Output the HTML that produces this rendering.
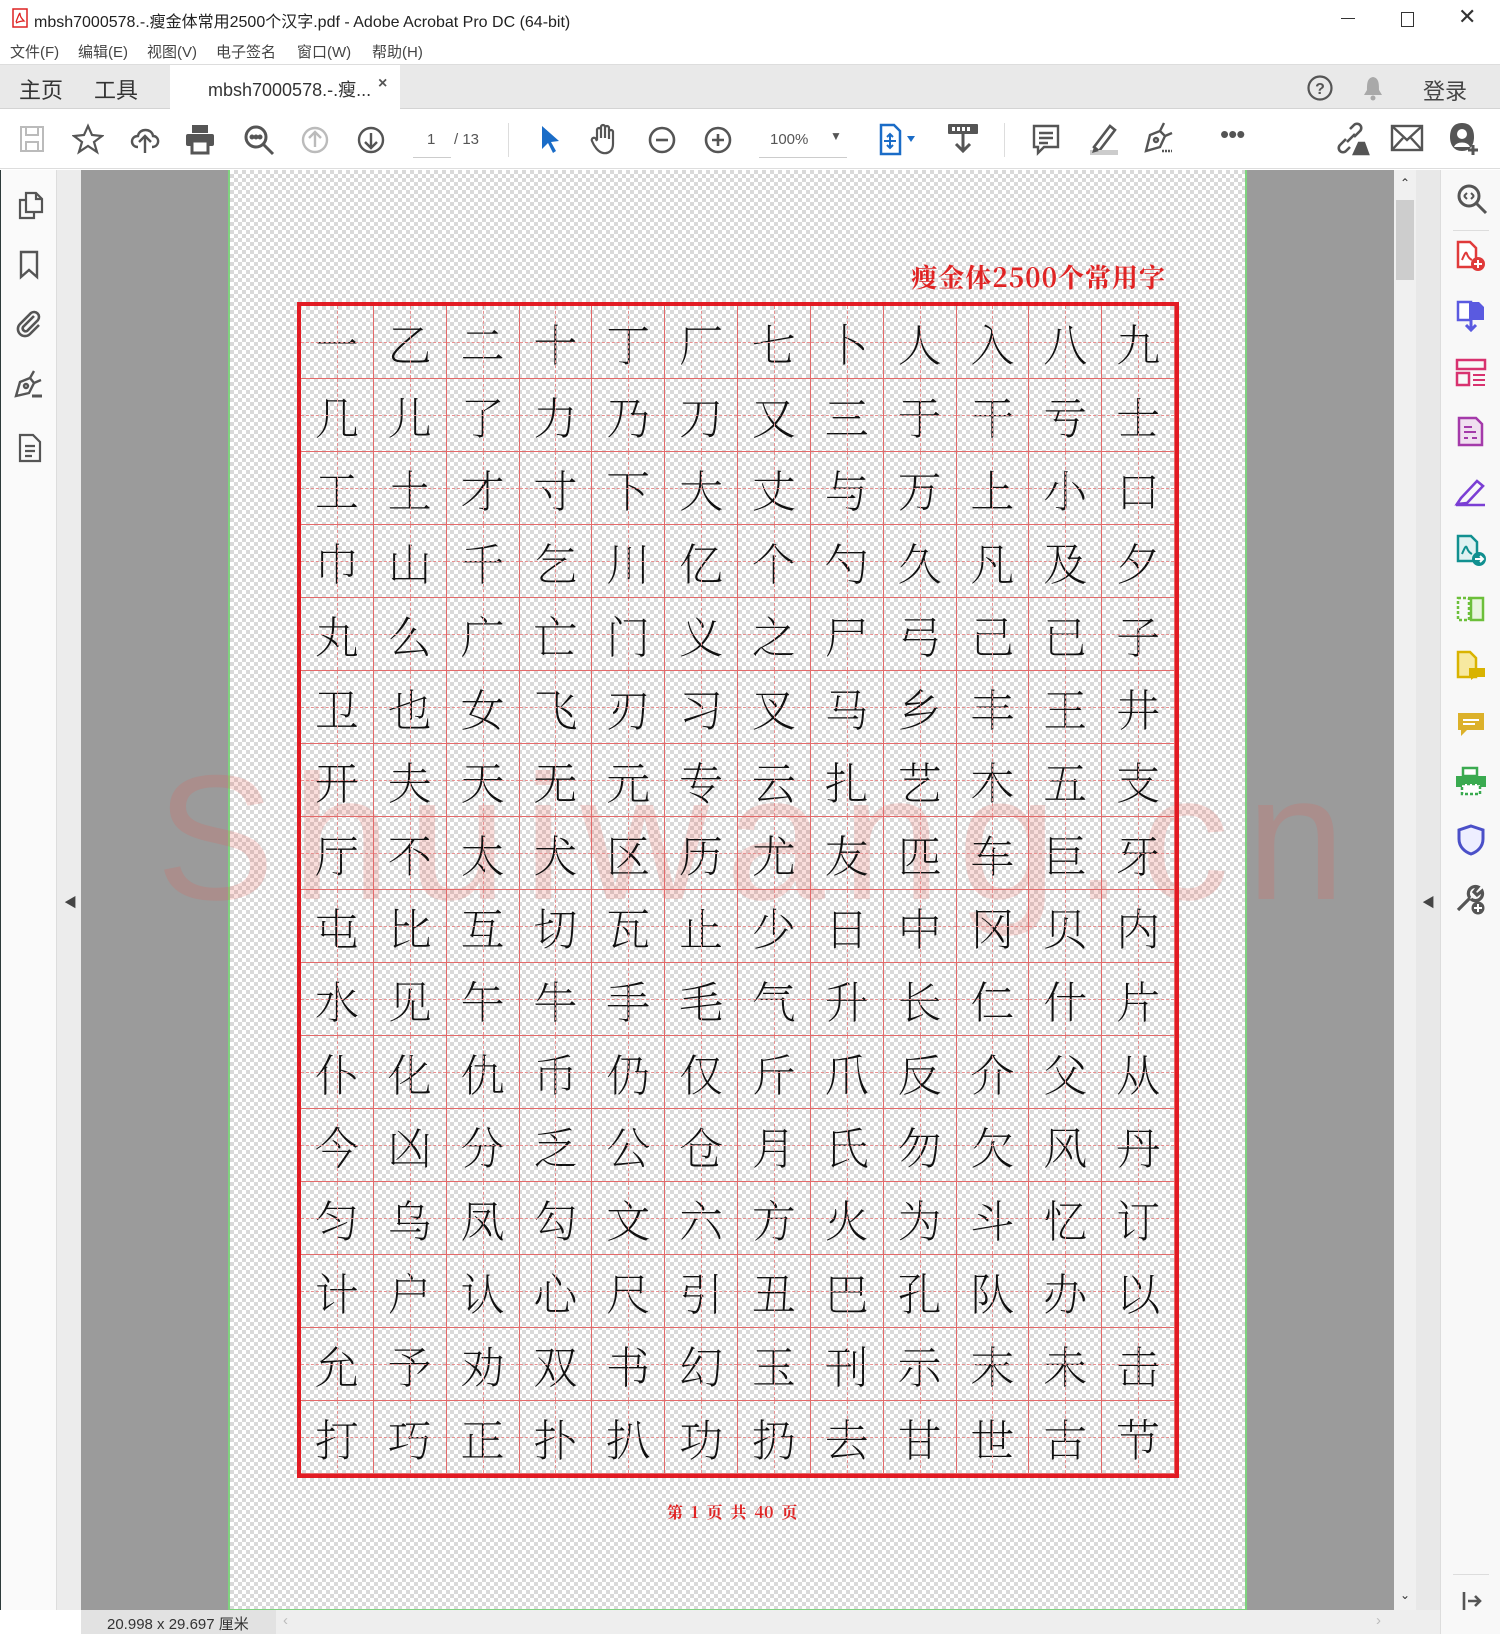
<!DOCTYPE html>
<html><head><meta charset="utf-8"><style>
*{margin:0;padding:0;box-sizing:border-box}
body{width:1500px;height:1634px;overflow:hidden;background:#fff;font-family:"Liberation Sans","Noto Sans CJK SC",sans-serif;position:relative;color:#333}
.abs{position:absolute}
#title{left:0;top:0;width:1500px;height:36px;background:#fff;font-size:16px;color:#222}
#menu{left:0;top:36px;width:1500px;height:29px;background:#fff;font-size:15px;color:#444;border-bottom:1px solid #ddd}
#menu span{position:absolute;top:5px}
#tabs{left:0;top:65px;width:1500px;height:44px;background:#e9e9e9;border-bottom:1px solid #d4d4d4}
#tb{left:0;top:109px;width:1500px;height:60px;background:#fff;border-bottom:1px solid #ddd}
#lp{left:0;top:170px;width:57px;height:1440px;background:#fafafa;border-right:1px solid #ddd}
#ls{left:57px;top:170px;width:24px;height:1440px;background:#ececec}
#canvas{left:81px;top:170px;width:1313px;height:1440px;background:#9b9b9b}
#sb{left:1394px;top:170px;width:22px;height:1440px;background:#f0f0f0}
#rs{left:1416px;top:170px;width:24px;height:1440px;background:#e8e8e8}
#rp{left:1440px;top:170px;width:60px;height:1464px;background:#f8f8f8;border-left:1px solid #ddd}
#page{left:228px;top:170px;width:1019px;height:1441px;border:2px solid #7fd37f;border-top:none;
background-color:#fff;background-image:linear-gradient(45deg,#d9d9d9 25%,transparent 25%,transparent 75%,#d9d9d9 75%),linear-gradient(45deg,#d9d9d9 25%,transparent 25%,transparent 75%,#d9d9d9 75%);background-size:8px 8px;background-position:0 0,4px 4px}
#grid{left:297px;top:302px;width:882px;height:1176px;border:4px solid #e21b23;display:grid;grid-template-columns:repeat(12,1fr);grid-template-rows:repeat(16,1fr)}
#grid div{position:relative;border-right:1px solid #e46a6a;border-bottom:1px solid #e46a6a;font-family:"Noto Serif CJK SC","WenQuanYi Zen Hei",serif;font-size:44px;font-weight:200;color:#111;text-align:center;line-height:72px}
#grid div::before{content:"";position:absolute;left:50%;top:0;bottom:0;border-left:1px dashed #e89090}
#grid div::after{content:"";position:absolute;top:50%;left:0;right:0;border-top:1px dashed #e89090}
#wm{left:156px;top:735px;font-size:178px;color:rgba(230,90,80,.2);font-family:"Liberation Sans",sans-serif;letter-spacing:17px;font-weight:400;white-space:nowrap}
#status{left:81px;top:1610px;width:1359px;height:24px;background:#eeeeee;font-size:15px;color:#333}
.ic{position:absolute}
</style></head><body>
<div id="title" class="abs">
<svg class="ic" style="left:12px;top:8px" width="16" height="20" viewBox="0 0 16 20"><rect x="1" y="1" width="14" height="18" fill="#fff" stroke="#d22" stroke-width="1.5"/><path d="M4 14 C7 6 8 4 8 6 C8 9 12 13 12 13 C9 13 6 14 4 15" fill="none" stroke="#d22" stroke-width="1.3"/></svg>
<span class="abs" style="left:34px;top:8px">mbsh7000578.-.瘦金体常用2500个汉字.pdf - Adobe Acrobat Pro DC (64-bit)</span>
<span class="abs" style="left:1341px;top:18px;width:14px;height:1px;background:#333"></span>
<span class="abs" style="left:1401px;top:12px;width:13px;height:15px;border:1px solid #333"></span>
<span class="abs" style="left:1458px;top:4px;font-size:22px;color:#333">✕</span>
</div>
<div id="menu" class="abs"><span style="left:10px">文件(F)</span><span style="left:78px">编辑(E)</span><span style="left:147px">视图(V)</span><span style="left:216px">电子签名</span><span style="left:297px">窗口(W)</span><span style="left:372px">帮助(H)</span></div>
<div id="tabs" class="abs">
<span class="abs" style="left:19px;top:8px;font-size:22px;color:#333">主页</span>
<span class="abs" style="left:94px;top:8px;font-size:22px;color:#333">工具</span>
<div class="abs" style="left:170px;top:0;width:230px;height:45px;background:#fff"><span class="abs" style="left:38px;top:11px;font-size:18px;color:#333">mbsh7000578.-.瘦...</span><span class="abs" style="left:208px;top:10px;font-size:16px;font-weight:bold;color:#555">×</span></div>
<svg class="ic" style="left:1306px;top:9px" width="28" height="28"><circle cx="14" cy="14" r="11.5" fill="none" stroke="#555" stroke-width="2.2"/><text x="14" y="20" font-size="16" font-weight="bold" text-anchor="middle" fill="#555" font-family="Liberation Sans">?</text></svg>
<svg class="ic" style="left:1360px;top:9px" width="26" height="28"><path d="M13 3 C7 4 7 10 7 16 L4 21 L22 21 L19 16 C19 10 19 4 13 3Z" fill="#a9a9a9"/><circle cx="13" cy="24" r="2.5" fill="#a9a9a9"/></svg>
<span class="abs" style="left:1423px;top:9px;font-size:22px;color:#444">登录</span>
</div>
<div id="tb" class="abs">
<svg class="ic" style="left:18px;top:15px" width="30" height="30" fill="none" stroke="#bbb" stroke-width="2"><rect x="3" y="3" width="22" height="24"/><rect x="8" y="3" width="12" height="8"/><rect x="8" y="18" width="12" height="9"/></svg>
<svg class="ic" style="left:72px;top:14px" width="32" height="32" fill="none" stroke="#555" stroke-width="2.2"><path d="M16 3 L20 12 L30 13 L22 19 L25 29 L16 23 L7 29 L10 19 L2 13 L12 12Z"/></svg>
<svg class="ic" style="left:128px;top:14px" width="34" height="32" fill="none" stroke="#555" stroke-width="2.4"><path d="M10 24 C2 24 2 13 10 13 C11 5 24 5 25 13 C32 13 32 24 24 24"/><path d="M17 30 V14 M11 19 L17 13 L23 19"/></svg>
<svg class="ic" style="left:184px;top:14px" width="32" height="32" fill="#555"><rect x="8" y="2" width="16" height="8"/><rect x="2" y="11" width="28" height="12" rx="2"/><rect x="8" y="18" width="16" height="12" fill="#fff" stroke="#555" stroke-width="3"/></svg>
<svg class="ic" style="left:242px;top:14px" width="34" height="34" fill="none" stroke="#555" stroke-width="3"><circle cx="14" cy="14" r="10"/><path d="M21 21 L31 31"/><circle cx="10" cy="14" r="1" fill="#555"/><circle cx="14" cy="14" r="1" fill="#555"/><circle cx="18" cy="14" r="1" fill="#555"/></svg>
<svg class="ic" style="left:300px;top:16px" width="30" height="30" fill="none" stroke="#bbb" stroke-width="2.4"><circle cx="15" cy="15" r="12"/><path d="M15 22 V8 M9 13 L15 7 L21 13"/></svg>
<svg class="ic" style="left:356px;top:16px" width="30" height="30" fill="none" stroke="#555" stroke-width="2.4"><circle cx="15" cy="15" r="12"/><path d="M15 8 V22 M9 17 L15 23 L21 17"/></svg>
<span class="abs" style="left:427px;top:22px;font-size:15px;color:#555">1</span>
<span class="abs" style="left:413px;top:48px;width:38px;height:1px;background:#ccc"></span>
<span class="abs" style="left:454px;top:22px;font-size:15px;color:#555">/ 13</span>
<span class="abs" style="left:508px;top:14px;width:1px;height:34px;background:#ddd"></span>
<svg class="ic" style="left:538px;top:14px" width="24" height="34"><path d="M4 3 L4 26 L10 20 L15 30 L18 28 L13 19 L21 18Z" fill="#1a6cc7"/></svg>
<svg class="ic" style="left:588px;top:13px" width="34" height="34" fill="none" stroke="#555" stroke-width="2.2"><path d="M9 18 V8 a2 2 0 0 1 4 0 V16 V5 a2 2 0 0 1 4 0 V16 V6 a2 2 0 0 1 4 0 V17 V10 a2 2 0 0 1 4 0 V22 C25 29 20 32 15 31 C10 30 6 24 4 19 a2 2 0 0 1 4-2 L9 19"/></svg>
<svg class="ic" style="left:646px;top:15px" width="32" height="32" fill="none" stroke="#555" stroke-width="2.6"><circle cx="16" cy="16" r="12"/><path d="M10 16 H22"/></svg>
<svg class="ic" style="left:702px;top:15px" width="32" height="32" fill="none" stroke="#555" stroke-width="2.6"><circle cx="16" cy="16" r="12"/><path d="M10 16 H22 M16 10 V22"/></svg>
<span class="abs" style="left:770px;top:22px;font-size:15px;color:#555">100%</span>
<span class="abs" style="left:830px;top:20px;font-size:12px;color:#555">▼</span>
<span class="abs" style="left:759px;top:48px;width:88px;height:1px;background:#ccc"></span>
<svg class="ic" style="left:878px;top:13px" width="42" height="36"><path d="M3 3 H16 L22 9 V32 H3Z" fill="#fff" stroke="#1a6cc7" stroke-width="2.5"/><path d="M12 12 V26 M6 19 H18 M9 15 L12 12 L15 15 M9 23 L12 26 L15 23" stroke="#1a6cc7" stroke-width="2" fill="none"/><path d="M29 14 L37 14 L33 20Z" fill="#1a6cc7"/></svg>
<svg class="ic" style="left:946px;top:12px" width="34" height="36" fill="#555"><rect x="2" y="3" width="30" height="10" rx="1"/><rect x="6" y="6" width="3" height="4" fill="#fff"/><rect x="11" y="6" width="3" height="4" fill="#fff"/><rect x="16" y="6" width="3" height="4" fill="#fff"/><rect x="21" y="6" width="3" height="4" fill="#fff"/><path d="M17 13 V30 M10 23 L17 30 L24 23" stroke="#555" stroke-width="3" fill="none"/></svg>
<span class="abs" style="left:1004px;top:14px;width:1px;height:34px;background:#ddd"></span>
<svg class="ic" style="left:1030px;top:14px" width="32" height="34" fill="none" stroke="#555" stroke-width="2.4"><path d="M4 3 H28 V24 H14 L8 30 V24 H4Z"/><path d="M9 10 H23 M9 15 H23 M9 20 H18"/></svg>
<svg class="ic" style="left:1086px;top:12px" width="34" height="36"><path d="M8 26 L24 5 L29 9 L13 30Z" fill="none" stroke="#555" stroke-width="2.6"/><rect x="4" y="29" width="28" height="5" fill="#ccc"/><path d="M6 32 L8 26 L13 30Z" fill="#555"/></svg>
<svg class="ic" style="left:1140px;top:12px" width="36" height="36" fill="none" stroke="#555" stroke-width="2.4"><path d="M6 30 L10 14 L20 10 L25 15 L20 26Z"/><path d="M20 10 L24 2 M25 15 L32 12"/><circle cx="16" cy="19" r="2"/><path d="M22 30 h10" stroke-dasharray="2 1"/></svg>
<span class="abs" style="left:1220px;top:10px;font-size:26px;color:#555;letter-spacing:-1px">•••</span>
<svg class="ic" style="left:1334px;top:12px" width="36" height="36" fill="none" stroke="#555" stroke-width="2.6"><path d="M12 18 L6 24 a4 4 0 0 0 6 6 L16 26 M20 16 L26 10 a4 4 0 0 0 -6 -6 L16 8 M13 21 L21 13"/><path d="M20 33 L25 22 L30 22 L34 33Z" fill="#555"/></svg>
<svg class="ic" style="left:1390px;top:14px" width="34" height="30" fill="none" stroke="#555" stroke-width="2.4"><rect x="2" y="3" width="30" height="24"/><path d="M2 3 L17 17 L32 3 M2 27 L13 15 M32 27 L21 15"/></svg>
<svg class="ic" style="left:1446px;top:12px" width="36" height="36"><path d="M16 2 C6 2 4 10 4 16 C4 24 8 30 16 30 C24 30 28 24 28 16 C28 10 26 2 16 2Z" fill="#555"/><circle cx="16" cy="13" r="5" fill="#fff"/><path d="M8 26 C10 20 22 20 24 26" fill="#fff"/><path d="M27 24 V34 M22 29 H32" stroke="#555" stroke-width="3"/></svg>
</div>
<div id="lp" class="abs">
<svg class="ic" style="left:16px;top:20px" width="30" height="30" fill="none" stroke="#555" stroke-width="2.2"><path d="M10 10 H4 V28 H18 V22"/><path d="M10 3 H20 L26 9 V22 H10Z"/><path d="M20 3 V9 H26"/></svg>
<svg class="ic" style="left:18px;top:80px" width="24" height="30" fill="none" stroke="#555" stroke-width="2.4"><path d="M3 2 H19 V27 L11 20 L3 27Z"/></svg>
<svg class="ic" style="left:14px;top:138px" width="32" height="32" fill="none" stroke="#555" stroke-width="2.6"><path d="M20 8 L9 19 a3 3 0 0 0 4 4 L24 12 a5 5 0 0 0 -7 -7 L6 16 a7 7 0 0 0 10 10 L25 17"/></svg>
<svg class="ic" style="left:12px;top:198px" width="34" height="34" fill="none" stroke="#555" stroke-width="2.4"><path d="M4 28 L8 14 L18 10 L22 15 L17 25Z"/><path d="M18 10 L22 3 M22 15 L29 12"/><circle cx="14" cy="18" r="2"/><path d="M20 28 h10" stroke-width="3"/></svg>
<svg class="ic" style="left:16px;top:262px" width="28" height="32" fill="none" stroke="#555" stroke-width="2.2"><path d="M4 3 H17 L24 10 V29 H4Z"/><path d="M9 14 H19 M9 19 H19 M9 24 H16"/></svg>
<span class="abs" style="left:0;top:0;width:1px;height:1440px;background:#2d3a3a"></span>
</div>
<div id="ls" class="abs"><span class="abs" style="left:7px;top:722px;font-size:13px;color:#444">◀</span></div>
<div id="canvas" class="abs"></div>
<div id="page" class="abs"></div>
<div class="abs" style="right:334px;top:258px;font-family:'Noto Serif CJK SC',serif;font-size:26px;font-weight:bold;color:#e02424;letter-spacing:1px">瘦金体2500个常用字</div>
<div id="wm" class="abs">Shuiwang.cn</div>
<div id="grid" class="abs">
<div>一</div><div>乙</div><div>二</div><div>十</div><div>丁</div><div>厂</div><div>七</div><div>卜</div><div>人</div><div>入</div><div>八</div><div>九</div>
<div>几</div><div>儿</div><div>了</div><div>力</div><div>乃</div><div>刀</div><div>又</div><div>三</div><div>于</div><div>干</div><div>亏</div><div>士</div>
<div>工</div><div>土</div><div>才</div><div>寸</div><div>下</div><div>大</div><div>丈</div><div>与</div><div>万</div><div>上</div><div>小</div><div>口</div>
<div>巾</div><div>山</div><div>千</div><div>乞</div><div>川</div><div>亿</div><div>个</div><div>勺</div><div>久</div><div>凡</div><div>及</div><div>夕</div>
<div>丸</div><div>么</div><div>广</div><div>亡</div><div>门</div><div>义</div><div>之</div><div>尸</div><div>弓</div><div>己</div><div>已</div><div>子</div>
<div>卫</div><div>也</div><div>女</div><div>飞</div><div>刃</div><div>习</div><div>叉</div><div>马</div><div>乡</div><div>丰</div><div>王</div><div>井</div>
<div>开</div><div>夫</div><div>天</div><div>无</div><div>元</div><div>专</div><div>云</div><div>扎</div><div>艺</div><div>木</div><div>五</div><div>支</div>
<div>厅</div><div>不</div><div>太</div><div>犬</div><div>区</div><div>历</div><div>尤</div><div>友</div><div>匹</div><div>车</div><div>巨</div><div>牙</div>
<div>屯</div><div>比</div><div>互</div><div>切</div><div>瓦</div><div>止</div><div>少</div><div>日</div><div>中</div><div>冈</div><div>贝</div><div>内</div>
<div>水</div><div>见</div><div>午</div><div>牛</div><div>手</div><div>毛</div><div>气</div><div>升</div><div>长</div><div>仁</div><div>什</div><div>片</div>
<div>仆</div><div>化</div><div>仇</div><div>币</div><div>仍</div><div>仅</div><div>斤</div><div>爪</div><div>反</div><div>介</div><div>父</div><div>从</div>
<div>今</div><div>凶</div><div>分</div><div>乏</div><div>公</div><div>仓</div><div>月</div><div>氏</div><div>勿</div><div>欠</div><div>风</div><div>丹</div>
<div>匀</div><div>乌</div><div>凤</div><div>勾</div><div>文</div><div>六</div><div>方</div><div>火</div><div>为</div><div>斗</div><div>忆</div><div>订</div>
<div>计</div><div>户</div><div>认</div><div>心</div><div>尺</div><div>引</div><div>丑</div><div>巴</div><div>孔</div><div>队</div><div>办</div><div>以</div>
<div>允</div><div>予</div><div>劝</div><div>双</div><div>书</div><div>幻</div><div>玉</div><div>刊</div><div>示</div><div>末</div><div>未</div><div>击</div>
<div>打</div><div>巧</div><div>正</div><div>扑</div><div>扒</div><div>功</div><div>扔</div><div>去</div><div>甘</div><div>世</div><div>古</div><div>节</div>
</div>
<div class="abs" style="left:667px;top:1500px;font-family:'Noto Serif CJK SC',serif;font-size:16px;font-weight:bold;color:#e02424;word-spacing:4px">第 1 页 共 40 页</div>
<div id="sb" class="abs"><span class="abs" style="left:6px;top:6px;font-size:12px;color:#333">⌃</span><div class="abs" style="left:2px;top:30px;width:18px;height:80px;background:#cdcdcd"></div><span class="abs" style="left:6px;top:1418px;font-size:12px;color:#333">⌄</span></div>
<div id="rs" class="abs"><span class="abs" style="left:6px;top:722px;font-size:13px;color:#444">◀</span></div>
<div id="rp" class="abs">
<svg class="ic" style="left:14px;top:12px" width="34" height="34" fill="none" stroke="#555" stroke-width="3"><circle cx="14" cy="14" r="10"/><path d="M21 21 L31 31"/><path d="M9 14 L12 11 M9 14 L12 17 M19 14 L16 11 M19 14 L16 17" stroke-width="2"/></svg>
<span class="abs" style="left:12px;top:60px;width:36px;height:1px;background:#ddd"></span>
<svg class="ic" style="left:14px;top:70px" width="32" height="32"><path d="M3 2 H15 L21 8 V27 H3Z" fill="#fff" stroke="#e03a3a" stroke-width="2.5"/><path d="M7 20 C10 13 11 11 12 14 C13 17 15 19 17 20" fill="none" stroke="#e03a3a" stroke-width="2"/><circle cx="23" cy="24" r="7" fill="#e03a3a"/><path d="M23 20 V28 M19 24 H27" stroke="#fff" stroke-width="2"/></svg>
<svg class="ic" style="left:14px;top:128px" width="32" height="34"><path d="M3 4 H16 V22 H3Z" fill="#fff" stroke="#5a5ae0" stroke-width="2.5"/><path d="M14 4 H24 L29 9 V22 H14Z" fill="#5a5ae0"/><path d="M16 20 V32 M11 27 L16 32 L21 27" stroke="#5a5ae0" stroke-width="3" fill="none"/></svg>
<svg class="ic" style="left:14px;top:188px" width="32" height="30"><rect x="2" y="2" width="28" height="9" fill="none" stroke="#d8326f" stroke-width="2.5"/><rect x="2" y="15" width="12" height="12" fill="none" stroke="#d8326f" stroke-width="2.5"/><path d="M18 17 H30 M18 22 H30 M18 27 H30" stroke="#d8326f" stroke-width="2"/></svg>
<svg class="ic" style="left:15px;top:246px" width="30" height="32"><path d="M3 2 H20 L26 8 V29 H3Z" fill="#f0e0f0" stroke="#a43aaa" stroke-width="2.5"/><path d="M8 11 H16 M8 16 H20 M8 22 H12 M16 22 H21" stroke="#a43aaa" stroke-width="2"/></svg>
<svg class="ic" style="left:12px;top:306px" width="36" height="32"><path d="M4 28 L8 22 L24 5 L30 10 L14 27Z" fill="none" stroke="#7b3fd4" stroke-width="2.6"/><path d="M3 29 H32" stroke="#7b3fd4" stroke-width="2.6"/></svg>
<svg class="ic" style="left:14px;top:364px" width="34" height="34"><path d="M3 2 H16 L22 8 V27 H3Z" fill="#e0f2f2" stroke="#119090" stroke-width="2.5"/><path d="M7 20 C10 13 11 11 12 14 C13 17 15 19 17 20" fill="none" stroke="#119090" stroke-width="2"/><circle cx="24" cy="25" r="7" fill="#119090"/><path d="M20 25 H28 M25 22 L28 25 L25 28" stroke="#fff" stroke-width="2" fill="none"/></svg>
<svg class="ic" style="left:14px;top:424px" width="32" height="30"><rect x="3" y="4" width="11" height="22" fill="none" stroke="#6cbf3a" stroke-width="2.5" stroke-dasharray="3 2"/><rect x="16" y="4" width="12" height="22" fill="#e8f5dd" stroke="#6cbf3a" stroke-width="2.5"/></svg>
<svg class="ic" style="left:14px;top:480px" width="34" height="32"><path d="M3 2 H15 L21 8 V27 H3Z" fill="#f7e9a0" stroke="#d9b300" stroke-width="2.5"/><path d="M14 18 H30 V27 H20 L16 30 V27 H14Z" fill="#d9b300"/></svg>
<svg class="ic" style="left:14px;top:540px" width="32" height="30"><path d="M3 3 H29 V20 H12 L6 26 V20 H3Z" fill="#dcb12a"/><path d="M8 10 H24 M8 14 H20" stroke="#fff" stroke-width="2"/></svg>
<svg class="ic" style="left:12px;top:594px" width="36" height="34"><path d="M10 4 H24 V12 H10Z" fill="#fff" stroke="#3aaa50" stroke-width="2.5"/><rect x="3" y="12" width="30" height="11" fill="#3aaa50"/><rect x="9" y="20" width="18" height="10" fill="#fff" stroke="#3aaa50" stroke-width="2.5" stroke-dasharray="3 2"/></svg>
<svg class="ic" style="left:15px;top:654px" width="30" height="32"><path d="M15 2 L27 6 V15 C27 23 21 28 15 30 C9 28 3 23 3 15 V6Z" fill="#eeeeff" stroke="#4b50c8" stroke-width="3"/></svg>
<svg class="ic" style="left:12px;top:712px" width="36" height="34"><path d="M5 28 L17 16 M17 16 a7 7 0 0 1 8 -11 l-4 5 3 3 5 -4 a7 7 0 0 1 -11 8" fill="none" stroke="#555" stroke-width="3.2"/><circle cx="25" cy="26" r="6.5" fill="#555"/><path d="M25 22 V30 M21 26 H29" stroke="#fff" stroke-width="2"/></svg>
<span class="abs" style="left:12px;top:1404px;width:36px;height:1px;background:#ddd"></span>
<svg class="ic" style="left:20px;top:1420px" width="22" height="22" fill="none" stroke="#555" stroke-width="2.6"><path d="M3 2 V20 M7 11 H19 M14 6 L19 11 L14 16"/></svg>
</div>
<div id="status" class="abs"><div class="abs" style="left:0;top:0;width:195px;height:24px;background:#e2e2e2"></div><span class="abs" style="left:26px;top:3px">20.998 x 29.697 厘米</span><span class="abs" style="left:202px;top:2px;color:#bbb">‹</span><span class="abs" style="left:1295px;top:2px;color:#bbb">›</span></div>
</body></html>
